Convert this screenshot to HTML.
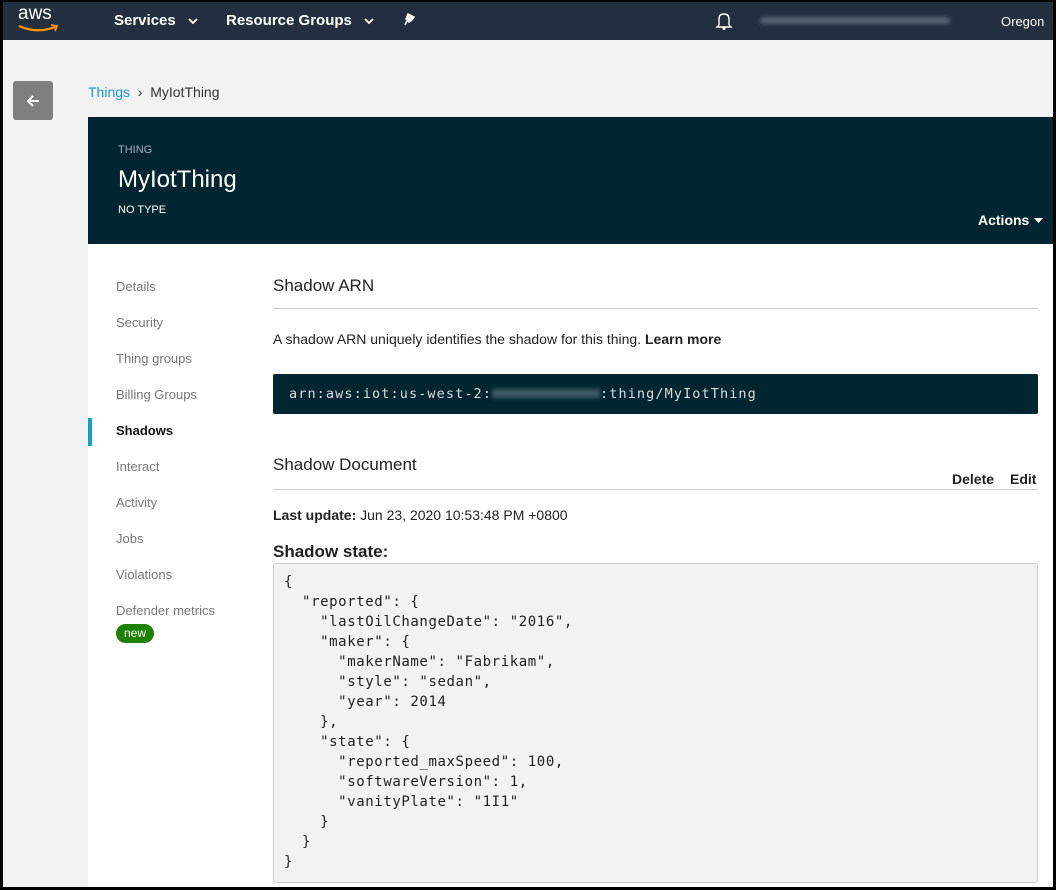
<!DOCTYPE html>
<html><head><meta charset="utf-8"><style>
*{margin:0;padding:0;box-sizing:border-box}
body{width:1056px;height:890px;background:#000;font-family:"Liberation Sans","DejaVu Sans",sans-serif;position:relative;overflow:hidden}
.page{position:absolute;left:3px;top:2px;width:1050px;height:885px;background:#f2f2f2;overflow:hidden}
.nav{position:absolute;left:0;top:0;width:1050px;height:38px;background:#232f3e;color:#fff}
.nav span{position:absolute;font-weight:bold;font-size:15px;top:10px}
.abs{position:absolute}
.panel{position:absolute;left:85px;top:115px;width:965px;height:770px;background:#fff}
.hdr{position:absolute;left:0;top:0;width:965px;height:127px;background:#012631;color:#fff}
.side a{position:absolute;left:28px;font-size:13px;color:#777;text-decoration:none}
.code{font-family:"DejaVu Sans Mono",monospace}
</style></head><body>
<div class="page">
 <div class="nav">
  <div class="abs" style="left:15px;top:1px;font-size:19px;color:#fff;font-weight:normal;letter-spacing:0px">aws</div>
  <svg class="abs" style="left:14px;top:22px" width="44" height="10"><path d="M2 2 Q20 10 38 3" stroke="#f90" stroke-width="2.2" fill="none"/><path d="M34 1 L40 2 L38 7" stroke="#f90" stroke-width="1.8" fill="none"/></svg>
  <span style="left:111px">Services</span>
  <svg class="abs" style="left:185px;top:16px" width="10" height="7"><path d="M1 1 L5 5 L9 1" stroke="#fff" stroke-width="1.8" fill="none"/></svg>
  <span style="left:223px">Resource Groups</span>
  <svg class="abs" style="left:361px;top:16px" width="10" height="7"><path d="M1 1 L5 5 L9 1" stroke="#fff" stroke-width="1.8" fill="none"/></svg>
  <svg class="abs" style="left:401px;top:11px" width="12" height="14"><path d="M4 1 L10 4 L8 7 L5 9 L2 6 Z M3 8 L1 12" stroke="#fff" fill="#fff" stroke-width="1.5"/></svg>
  <svg class="abs" style="left:712px;top:9px" width="18" height="20"><path d="M4 14 L4 8 Q4 3 9 3 Q14 3 14 8 L14 14 L16 16 L2 16 Z" stroke="#fff" fill="none" stroke-width="1.4"/><circle cx="9" cy="17.5" r="1.5" fill="#fff"/></svg>
  <div class="abs" style="left:757px;top:15px;width:190px;height:7px;background:#5a6472;border-radius:4px;filter:blur(2px)"></div>
  <div class="abs" style="left:998px;top:12px;font-size:13px">Oregon</div>
 </div>
 <div class="abs" style="left:10px;top:79px;width:40px;height:39px;background:#7f7f7f;border-radius:3px"></div>
 <svg class="abs" style="left:22px;top:91px" width="16" height="16"><path d="M14 8 L3 8 M8 3 L3 8 L8 13" stroke="#fff" stroke-width="2" fill="none"/></svg>
 <div class="abs" style="left:85px;top:82px;font-size:14px"><span style="color:#1a9cc9">Things</span> <span style="color:#333">&nbsp;›&nbsp; MyIotThing</span></div>
 <div class="panel">
  <div class="hdr">
   <div class="abs" style="left:30px;top:27px;font-size:11px;color:#aab">THING</div>
   <div class="abs" style="left:30px;top:49px;font-size:24px">MyIotThing</div>
   <div class="abs" style="left:30px;top:87px;font-size:11px">NO TYPE</div>
   <div class="abs" style="left:890px;top:95px;font-size:14px;font-weight:bold">Actions</div>
   <svg class="abs" style="left:946px;top:101px" width="9" height="5"><path d="M0 0 L9 0 L4.5 5Z" fill="#fff"/></svg>
  </div>
  <div class="side">
   <a style="top:162px">Details</a><a style="top:198px">Security</a><a style="top:234px">Thing groups</a><a style="top:270px">Billing Groups</a>
   <div class="abs" style="left:0;top:301px;width:4px;height:28px;background:#1a9cc9"></div>
   <a style="top:306px;color:#111;font-weight:bold">Shadows</a>
   <a style="top:342px">Interact</a><a style="top:378px">Activity</a><a style="top:414px">Jobs</a><a style="top:450px">Violations</a><a style="top:486px">Defender metrics</a>
   <div class="abs" style="left:28px;top:507px;width:38px;height:19px;background:#1d8102;border-radius:10px;color:#fff;font-size:12px;text-align:center;line-height:19px">new</div>
  </div>
  <div class="abs" style="left:185px;top:159px;font-size:17px;color:#222">Shadow ARN</div>
  <div class="abs" style="left:185px;top:191px;width:765px;height:1px;background:#ccc"></div>
  <div class="abs" style="left:185px;top:214px;font-size:14px;color:#222">A shadow ARN uniquely identifies the shadow for this thing. <b>Learn more</b></div>
  <div class="abs" style="left:185px;top:257px;width:765px;height:40px;background:#012631;border-radius:2px"></div>
  <div class="abs code" style="left:201px;top:269px;font-size:13.5px;color:#ddd;letter-spacing:1.1px">arn:aws:iot:us-west-2:<span style="display:inline-block;width:108px;height:9px;background:#3f5a63;filter:blur(2px)"></span>:thing/MyIotThing</div>
  <div class="abs" style="left:185px;top:338px;font-size:17px;color:#222">Shadow Document</div>
  <div class="abs" style="left:864px;top:354px;font-size:14px;font-weight:bold;color:#222">Delete</div>
  <div class="abs" style="left:922px;top:354px;font-size:14px;font-weight:bold;color:#222">Edit</div>
  <div class="abs" style="left:185px;top:372px;width:765px;height:1px;background:#ccc"></div>
  <div class="abs" style="left:185px;top:390px;font-size:14px;color:#222"><b>Last update:</b> Jun 23, 2020 10:53:48 PM +0800</div>
  <div class="abs" style="left:185px;top:425px;font-size:17px;font-weight:bold;color:#222">Shadow state:</div>
  <div class="abs" style="left:185px;top:446px;width:765px;height:320px;background:#f2f2f2;border:1px solid #ccc;border-radius:3px"></div>
  <pre class="abs code" style="left:196px;top:455px;font-size:14px;line-height:20px;color:#222;letter-spacing:0.6px">{
  "reported": {
    "lastOilChangeDate": "2016",
    "maker": {
      "makerName": "Fabrikam",
      "style": "sedan",
      "year": 2014
    },
    "state": {
      "reported_maxSpeed": 100,
      "softwareVersion": 1,
      "vanityPlate": "1I1"
    }
  }
}</pre>
 </div>
</div>
</body></html>
